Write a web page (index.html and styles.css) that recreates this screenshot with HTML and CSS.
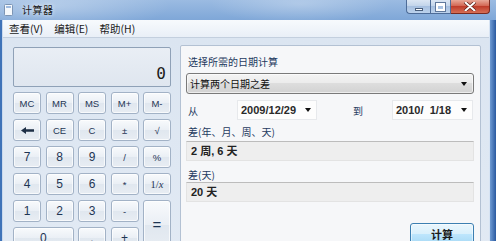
FILE: index.html
```html
<!DOCTYPE html>
<html lang="zh-CN">
<head>
  <meta charset="UTF-8">
  <title>计算器</title>
  <link rel="stylesheet" href="styles.css">
</head>
<body>
  <div class="window">
    <div class="titlebar">
      <svg class="app-icon" width="9" height="12" viewBox="0 0 9 12">
        <rect x="0.5" y="0.5" width="8" height="11" rx="1" fill="#f4f8fc" stroke="#7d95b4"/>
        <rect x="2" y="2" width="5" height="2" fill="#9fbbe0"/>
      </svg>
      <span class="title">计算器</span>
      <div class="caption-buttons">
        <div class="cap cap-min"><span class="min-bar"></span></div>
        <div class="cap cap-max"><span class="max-box"></span></div>
        <div class="cap cap-close">
          <svg width="12" height="9" viewBox="0 0 12 9">
            <path d="M1.5 0.5 L10.5 8.5 M10.5 0.5 L1.5 8.5" stroke="#5a2018" stroke-width="3.4" stroke-linecap="round"/>
            <path d="M1.5 0.5 L10.5 8.5 M10.5 0.5 L1.5 8.5" stroke="#ffffff" stroke-width="2" stroke-linecap="round"/>
          </svg>
        </div>
      </div>
    </div>

    <div class="frame">
      <div class="menubar">
        <span>查看(V)</span>
        <span>编辑(E)</span>
        <span>帮助(H)</span>
      </div>

      <div class="content">
        <div class="calc">
          <div class="display">0</div>
          <div class="keypad">
            <button class="key small">MC</button>
            <button class="key small">MR</button>
            <button class="key small">MS</button>
            <button class="key small">M+</button>
            <button class="key small">M-</button>

            <button class="key">
              <svg width="13" height="7" viewBox="0 0 13 7"><path d="M0 3.5 L5 0 L5 2.3 L13 2.3 L13 4.7 L5 4.7 L5 7 Z" fill="#1e2f46"/></svg>
            </button>
            <button class="key small">CE</button>
            <button class="key small">C</button>
            <button class="key small">±</button>
            <button class="key small">√</button>

            <button class="key">7</button>
            <button class="key">8</button>
            <button class="key">9</button>
            <button class="key small">/</button>
            <button class="key small">%</button>

            <button class="key">4</button>
            <button class="key">5</button>
            <button class="key">6</button>
            <button class="key small">*</button>
            <button class="key inv">1/<i>x</i></button>

            <button class="key">1</button>
            <button class="key">2</button>
            <button class="key">3</button>
            <button class="key small">-</button>
            <button class="key equals">=</button>

            <button class="key zero">0</button>
            <button class="key">.</button>
            <button class="key">+</button>
          </div>
        </div>

        <div class="panel">
          <div class="field-label">选择所需的日期计算</div>
          <div class="combo">
            <span>计算两个日期之差</span>
            <span class="arrow"></span>
          </div>

          <div class="date-row">
            <span class="lbl-from">从</span>
            <div class="date"><span>2009/12/29</span><span class="arrow"></span></div>
            <span class="lbl-to">到</span>
            <div class="date"><span>2010/&nbsp;&nbsp;1/18</span><span class="arrow"></span></div>
          </div>

          <div class="field-label result-label">差(年、月、周、天)</div>
          <div class="result">2 周, 6 天</div>

          <div class="field-label result-label second">差(天)</div>
          <div class="result">20 天</div>

          <button class="calc-btn">计算</button>
        </div>
      </div>
    </div>
  </div>
</body>
</html>
```

FILE: styles.css
```css
* {
  margin: 0;
  padding: 0;
  box-sizing: border-box;
}

body {
  width: 496px;
  height: 241px;
  overflow: hidden;
  font-family: "Noto Sans", "Noto Sans CJK SC", sans-serif;
}

.window {
  width: 496px;
  height: 241px;
  overflow: hidden;
  display: flex;
  flex-direction: column;
  background: linear-gradient(to right,
    #3f73b8 0, #3f73b8 2px, #c9d9ee 2px, #c9d9ee 3px,
    #dce6f2 3px, #dce6f2 489px,
    #d6e3f3 489px, #d6e3f3 490px, #6f9bd3 490px, #2a5aa0 496px);
}

/* title bar */
.titlebar {
  height: 20px;
  flex: none;
  display: flex;
  align-items: flex-start;
  background:
    radial-gradient(ellipse 120px 26px at 50px 6px, rgba(255,255,255,0.3), transparent),
    radial-gradient(ellipse 90px 20px at 300px 4px, rgba(255,255,255,0.25), transparent),
    linear-gradient(to bottom, #9bbbe2, #7fa7d8);
}

.app-icon {
  margin: 4px 0 0 4px;
}

.title {
  margin: 3px 0 0 9px;
  font-family: "Noto Sans CJK SC", sans-serif;
  font-size: 10px;
  line-height: 14px;
  letter-spacing: 0.5px;
  color: #1b1b1b;
  text-shadow: 0 0 4px rgba(255,255,255,0.9);
}

.caption-buttons {
  margin-left: auto;
  margin-right: 6px;
  display: flex;
}

.cap {
  height: 14px;
  border: 1px solid #4d6c98;
  border-top: none;
  display: flex;
  align-items: center;
  justify-content: center;
  background: linear-gradient(to bottom, #dbe6f3, #c0d3ea 50%, #a7c0e0 50%, #bcd2ec);
}

.cap-min {
  width: 24px;
  border-radius: 0 0 0 4px;
  border-right: none;
  align-items: flex-end;
}

.cap-max {
  width: 21px;
}

.cap-close {
  width: 39px;
  border-left: none;
  border-radius: 0 0 4px 0;
  border-color: #7a2a20;
  background: linear-gradient(to bottom, #e8a898, #d0604c 50%, #bf3d2b 50%, #d66f56);
}

.min-bar {
  width: 8px;
  height: 3px;
  margin-bottom: 2px;
  background: #ffffff;
  border: 1px solid #4a5f7c;
}

.max-box {
  width: 9px;
  height: 8px;
  border: 2px solid #ffffff;
  border-top-width: 3px;
  outline: 1px solid #5f789c;
}

/* window body */
.frame {
  flex: 1;
  margin: 0 7px 0 3px;
  display: flex;
  flex-direction: column;
}

.menubar {
  height: 18px;
  flex: none;
  display: flex;
  align-items: center;
  gap: 11px;
  padding-left: 6px;
  background: linear-gradient(to bottom, #f7fafd, #e9eff7);
  border-bottom: 1px solid #c3cfde;
  font-family: "Noto Sans CJK SC", sans-serif;
  font-size: 10.5px;
  color: #1a1a1a;
}

.content {
  flex: none;
  height: 230px;
  display: flex;
  gap: 9px;
  padding: 7px 8px 0 10px;
  background: linear-gradient(to bottom, #dbe5f1, #e2eaf4);
}

/* standard calculator */
.calc {
  width: 158px;
  flex: none;
  padding-top: 2px;
}

.display {
  height: 40px;
  border: 1px solid #8fa1b7;
  border-radius: 2px;
  background: linear-gradient(to bottom, #e9eef5, #dfe6ef);
  text-align: right;
  padding: 17px 4px 0 0;
  font-family: "DejaVu Sans Mono", monospace;
  font-size: 16px;
  line-height: 18px;
  color: #1a1a1a;
}

.keypad {
  margin-top: 5px;
  display: grid;
  grid-template-columns: repeat(5, 28px);
  grid-auto-rows: 22px;
  column-gap: 4.5px;
  row-gap: 5px;
}

.key {
  border: 1px solid #a2b2c6;
  border-radius: 3px;
  background: linear-gradient(to bottom, #f8fafc, #eaeff5 50%, #e0e7ef 51%, #e8edf3);
  box-shadow: inset 0 0 0 1px rgba(255,255,255,0.7);
  color: #1e3554;
  font-family: "Liberation Sans", sans-serif;
  font-size: 12px;
  display: flex;
  align-items: center;
  justify-content: center;
}

.key.small {
  font-size: 9.5px;
}

.key.inv {
  font-family: "Liberation Serif", serif;
  font-size: 10.5px;
}

.key.equals {
  grid-row: span 2;
  font-size: 15px;
}

.key.zero {
  grid-column: span 2;
}

/* date calculation panel */
.panel {
  width: 301px;
  flex: none;
  border: 1px solid #b3c1d3;
  border-radius: 2px 2px 0 0;
  background: #f6f7f9;
  padding: 9px 6px 0 5px;
  display: flex;
  flex-direction: column;
}

.field-label {
  font-family: "Noto Sans CJK SC", sans-serif;
  font-size: 10px;
  line-height: 14px;
  color: #1f3a60;
  padding-left: 2px;
}

.combo {
  margin-top: 4px;
  height: 21px;
  border: 1px solid #7a7a7a;
  border-radius: 3px;
  background: linear-gradient(to bottom, #f4f4f4, #ebebeb 50%, #dddddd 50%, #d2d2d2);
  box-shadow: inset 0 0 0 1px rgba(255,255,255,0.6);
  display: flex;
  align-items: center;
  justify-content: space-between;
  padding: 0 6px 0 3px;
  font-family: "Noto Sans CJK SC", sans-serif;
  font-size: 10px;
  color: #111111;
}

.arrow {
  width: 0;
  height: 0;
  border-left: 3.5px solid transparent;
  border-right: 3.5px solid transparent;
  border-top: 4px solid #111111;
}

.date-row {
  margin-top: 6px;
  height: 20px;
  display: flex;
  align-items: center;
  padding-left: 2px;
  font-family: "Noto Sans CJK SC", sans-serif;
  font-size: 10px;
  color: #1f3a60;
}

.lbl-from {
  width: 49px;
}

.lbl-to {
  width: 39px;
  margin-left: 36px;
}

.date {
  width: 80px;
  height: 20px;
  border: 1px solid #e7e9ec;
  background: #fdfdfd;
  display: flex;
  align-items: center;
  justify-content: space-between;
  padding: 0 5px 0 3px;
  font-family: "Liberation Sans", sans-serif;
  font-size: 11px;
  font-weight: bold;
  color: #2a2a2a;
}

.date + .lbl-to + .date {
  width: 81px;
}

.result-label {
  margin-top: 5px;
}

.result-label.second {
  margin-top: 7px;
}

.result {
  margin-top: 2px;
  height: 20px;
  border: 1px solid #e3e3e3;
  border-top-color: #bcbcbc;
  background: #eeeeee;
  padding-left: 4px;
  font-family: "Liberation Sans", "Noto Sans CJK SC", sans-serif;
  font-size: 11px;
  font-weight: bold;
  line-height: 18px;
  color: #222222;
}

.result-label.second + .result {
  margin-top: 0;
}

.calc-btn {
  margin-top: 21px;
  margin-left: auto;
  width: 64px;
  height: 22px;
  border: 1px solid #3c7fb1;
  border-radius: 3px;
  background: linear-gradient(to bottom, #eaf6fd, #d9f0fc 50%, #bee6fd 50%, #a7d9f5);
  box-shadow: inset 0 0 0 1px rgba(255,255,255,0.5);
  font-family: "Noto Sans CJK SC", sans-serif;
  font-size: 11px;
  font-weight: bold;
  color: #1a1a1a;
}
```
